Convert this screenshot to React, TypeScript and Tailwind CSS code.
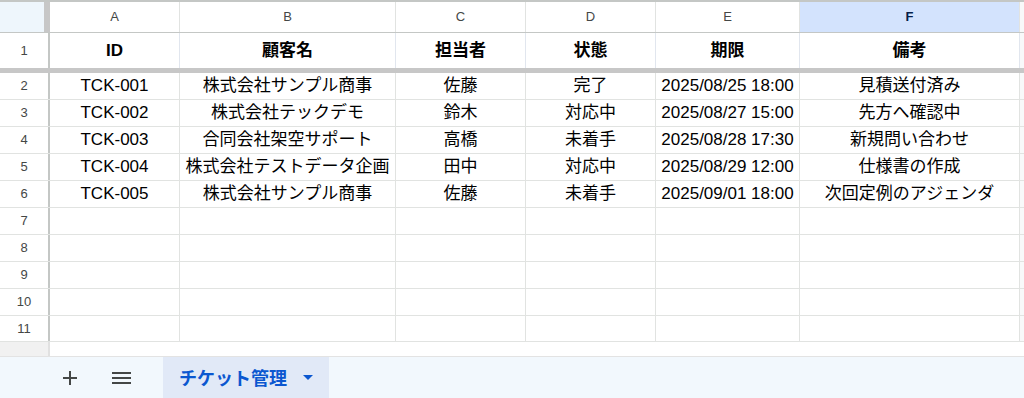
import React from 'react'

// 列の幅（右の罫線を含む）
const colWidths = ['w-[130px]', 'w-[216px]', 'w-[130px]', 'w-[130px]', 'w-[144px]', 'w-[220px]']
const letters = ['A', 'B', 'C', 'D', 'E', 'F']
const headers = ['ID', '顧客名', '担当者', '状態', '期限', '備考']

const rows = [
  ['TCK-001', '株式会社サンプル商事', '佐藤', '完了', '2025/08/25 18:00', '見積送付済み'],
  ['TCK-002', '株式会社テックデモ', '鈴木', '対応中', '2025/08/27 15:00', '先方へ確認中'],
  ['TCK-003', '合同会社架空サポート', '高橋', '未着手', '2025/08/28 17:30', '新規問い合わせ'],
  ['TCK-004', '株式会社テストデータ企画', '田中', '対応中', '2025/08/29 12:00', '仕様書の作成'],
  ['TCK-005', '株式会社サンプル商事', '佐藤', '未着手', '2025/09/01 18:00', '次回定例のアジェンダ'],
]

const emptyRows = [7, 8, 9, 10, 11]

const cellFont = "font-['Liberation_Sans','Noto_Sans_CJK_JP',sans-serif]"

function RowHeader({ n }: { n: number }) {
  return (
    <div className="w-[50px] shrink-0 flex items-center justify-center border-r-2 border-[#c4c7c5] bg-white text-[13px] text-[#444746]">
      {n}
    </div>
  )
}

function DataRow({ n, values }: { n: number; values?: string[] }) {
  return (
    <div className="flex h-[27px] border-b border-[#e1e3e1]">
      <RowHeader n={n} />
      {colWidths.map((w, i) => (
        <div
          key={i}
          className={`${w} shrink-0 flex items-center justify-center border-r border-[#e1e3e1] bg-white text-[17px] text-black whitespace-nowrap overflow-hidden ${cellFont}`}
        >
          {values ? values[i] : ''}
        </div>
      ))}
    </div>
  )
}

export default function App() {
  return (
    <div className="w-[1024px] h-[398px] flex flex-col bg-white overflow-hidden font-['Liberation_Sans','Noto_Sans_CJK_JP',sans-serif]">
      {/* シート本体 */}
      <div className="h-[341px] shrink-0 overflow-hidden border-t-2 border-[#c4c7c5] bg-[#f8f9fa]">
        {/* 列見出し */}
        <div className="flex h-[31px] border-b border-[#c4c7c5]">
          <div className="w-[50px] shrink-0 flex">
            <div className="w-[44px] bg-[#eef6fc]" />
            <div className="w-[6px] bg-[#c7c7c7]" />
          </div>
          {colWidths.map((w, i) => (
            <div
              key={i}
              className={`${w} shrink-0 flex items-center justify-center border-r border-[#e1e3e1] text-[13px] ${
                i === 5 ? 'bg-[#d3e3fd] font-bold text-[#041e49]' : 'bg-white text-[#444746]'
              }`}
            >
              {letters[i]}
            </div>
          ))}
        </div>

        {/* 1行目（固定行） */}
        <div className="flex h-[35px]">
          <RowHeader n={1} />
          {colWidths.map((w, i) => (
            <div
              key={i}
              className={`${w} shrink-0 flex items-center justify-center border-r border-[#e1e6ee] bg-white text-[17px] font-bold text-black ${cellFont}`}
            >
              {headers[i]}
            </div>
          ))}
        </div>
        <div className="h-[5px] bg-[#c7c7c7]" />

        {rows.map((r, i) => (
          <DataRow key={i} n={i + 2} values={r} />
        ))}
        {emptyRows.map((n) => (
          <DataRow key={n} n={n} />
        ))}
      </div>

      {/* スクロールバー領域 */}
      <div className="h-[16px] shrink-0 flex border-t border-[#e1e3e1] border-b border-b-[#e3e3e3]">
        <div className="w-[50px] bg-[#f1f1f1] border-r-2 border-[#e1e1e1]" />
        <div className="flex-1 bg-white" />
      </div>

      {/* シートタブ */}
      <div className="flex-1 flex bg-[#f2f8fd]">
        <div className="w-[163px] shrink-0 flex items-center">
          <svg className="ml-[63px]" width="14" height="14" viewBox="0 0 14 14">
            <path d="M7 0v14M0 7h14" stroke="#444746" strokeWidth="2" />
          </svg>
          <svg className="ml-[35px]" width="19" height="12" viewBox="0 0 19 12">
            <path d="M0 1h19M0 6h19M0 11h19" stroke="#444746" strokeWidth="2" />
          </svg>
        </div>
        <div className="w-[166px] flex items-center bg-[#e1e9f7] pl-[16px]">
          <span className="text-[18px] font-bold text-[#0b57d0] font-['Noto_Sans_CJK_JP',sans-serif]">チケット管理</span>
          <svg className="ml-[16px]" width="10" height="5" viewBox="0 0 10 5">
            <path d="M0 0h10L5 5z" fill="#0b57d0" />
          </svg>
        </div>
      </div>
    </div>
  )
}
